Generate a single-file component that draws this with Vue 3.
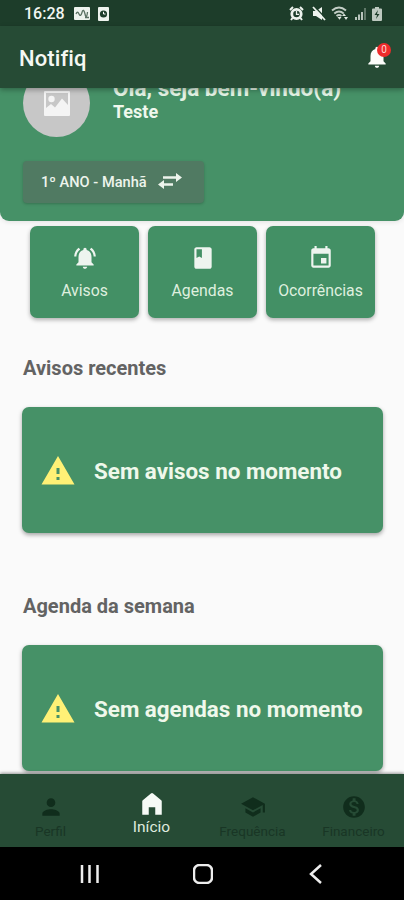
<script setup>
import { ref } from 'vue';

const icons = {
    bell: 'M12 22c1.1 0 2-.9 2-2h-4c0 1.1.89 2 2 2zm6-6v-5c0-3.07-1.64-5.64-4.5-6.32V4c0-.83-.67-1.5-1.5-1.5s-1.5.67-1.5 1.5v.68C7.63 5.36 6 7.92 6 11v5l-2 2v1h16v-1l-2-2z',
    bellActive: 'M7.58 4.08L6.15 2.65C3.75 4.48 2.17 7.3 2.03 10.5h2c.15-2.65 1.51-4.97 3.55-6.42zm12.39 6.42h2c-.15-3.2-1.73-6.02-4.12-7.85l-1.42 1.43c2.02 1.45 3.39 3.77 3.54 6.42zM18 11c0-3.07-1.64-5.64-4.5-6.32V4c0-.83-.67-1.5-1.5-1.5s-1.5.67-1.5 1.5v.68C7.63 5.36 6 7.92 6 11v5l-2 2v1h16v-1l-2-2v-5zm-6 11c.14 0 .27-.01.4-.04.65-.14 1.18-.58 1.44-1.18.1-.24.15-.5.15-.78h-4c.01 1.1.9 2 2.01 2z',
    book: 'M18 2H6c-1.1 0-2 .9-2 2v16c0 1.1.9 2 2 2h12c1.1 0 2-.9 2-2V4c0-1.1-.9-2-2-2zM6 4h5v8l-2.5-1.5L6 12V4z',
    event: 'M17 12h-5v5h5v-5zM16 1v2H8V1H6v2H5c-1.11 0-1.99.9-1.99 2L3 19c0 1.1.89 2 2 2h14c1.1 0 2-.9 2-2V5c0-1.1-.9-2-2-2h-1V1h-2zm3 18H5V8h14v11z',
    warning: 'M1 21h22L12 2 1 21zm12-3h-2v-2h2v2zm0-4h-2v-4h2v4z',
    person: 'M12 12c2.21 0 4-1.79 4-4s-1.79-4-4-4-4 1.79-4 4 1.79 4 4 4zm0 2c-2.67 0-8 1.34-8 4v2h16v-2c0-2.66-5.33-4-8-4z',
    home: 'M3 22V9.5Q3 9 3.5 8.6L11 2.3Q12 1.5 13 2.3L20.5 8.6Q21 9 21 9.5V22h-6v-7H9v7z',
    school: 'M5 13.18v4L12 21l7-3.82v-4L12 17l-7-3.82zM12 3L1 9l11 6 9-4.91V17h2V9L12 3z',
    money: 'M12 2C6.48 2 2 6.48 2 12s4.48 10 10 10 10-4.48 10-10S17.52 2 12 2zm1.41 16.09V20h-2.67v-1.93c-1.71-.36-3.16-1.46-3.27-3.4h1.96c.1 1.05.82 1.87 2.65 1.87 1.96 0 2.4-.98 2.4-1.59 0-.83-.44-1.61-2.67-2.14-2.48-.6-4.18-1.62-4.18-3.67 0-1.72 1.39-2.84 3.11-3.21V4h2.67v1.95c1.86.45 2.79 1.86 2.85 3.39H14.3c-.05-1.11-.64-1.87-2.22-1.87-1.5 0-2.4.68-2.4 1.64 0 .84.65 1.39 2.67 1.91s4.18 1.39 4.18 3.91c-.01 1.83-1.38 2.83-3.12 3.16z',
};

const shortcuts = [
    { name: 'Avisos', icon: icons.bellActive },
    { name: 'Agendas', icon: icons.book },
    { name: 'Ocorrências', icon: icons.event },
];

const sections = [
    { title: 'Avisos recentes', message: 'Sem avisos no momento' },
    { title: 'Agenda da semana', message: 'Sem agendas no momento' },
];

const tabs = [
    { name: 'Perfil', icon: icons.person },
    { name: 'Início', icon: icons.home },
    { name: 'Frequência', icon: icons.school },
    { name: 'Financeiro', icon: icons.money },
];

const activeTab = ref('Início');
const unread = ref(0);
</script>

<template>
  <div class="phone">
    <div class="status-bar">
      <span class="clock">16:28</span>
      <svg class="st-mail" viewBox="0 0 16 13">
        <rect width="16" height="13" rx="1" fill="#eef3ee" />
        <path d="M2 7q1.500-3.500 3 0t3-1.500 3 1.500 2.500-2M11 10.500h4" fill="none" stroke="#5c7264" stroke-width="1.300" />
      </svg>
      <svg class="st-app" viewBox="0 0 11 14">
        <rect width="11" height="14" rx="1" fill="#eef3ee" />
        <circle cx="5.500" cy="7" r="3.600" fill="#1d3d2a" />
        <path d="M5.500 4.800V7h2" fill="none" stroke="#fff" />
      </svg>
      <div class="status-icons">
        <svg width="15" height="15" viewBox="0 0 15 15">
          <path d="M1 4L4 1M14 4L11 1M3.500 12L2 14M11.500 12L13 14" stroke="#eef3ee" stroke-width="2" />
          <circle cx="7.500" cy="8" r="4.700" fill="#1d3d2a" stroke="#eef3ee" stroke-width="2.800" />
          <path d="M7.500 5v3.300h2.500" fill="none" stroke="#eef3ee" stroke-width="1.300" />
        </svg>
        <svg width="14" height="15" viewBox="0 0 14 15">
          <path d="M1 5h3l6-4v13l-6-4H1z" fill="#eef3ee" />
          <path d="M2 0l12 12.500" stroke="#1d3d2a" stroke-width="1.400" />
          <path d="M1 1l12 13" stroke="#eef3ee" stroke-width="1.800" />
        </svg>
        <svg width="18" height="15" viewBox="0 0 18 15">
          <path d="M1 4.500q7-6 14 0M3.300 7.500q4.700-4 9.400 0M5.500 10q2.500-2 5 0" fill="none" stroke="#c3cec6" stroke-width="1.900" />
          <path d="M6.500 11h4L8.500 13.800zM11 10l2-2.500 2 2.500zM13 11h4l-2 3z" fill="#dfe7e1" />
        </svg>
        <svg width="13" height="14" viewBox="0 0 13 14">
          <path d="M1 10h2v3H1zM4 7.500h2V13H4zM7 5h2v8H7z" fill="#b7c4bb" />
          <path d="M10 1h2v12h-2z" fill="#5f7868" />
        </svg>
        <svg class="st-battery" width="10" height="14" viewBox="0 0 10 14">
          <path d="M3 0h4v1.500h2q1 0 1 1V13q0 1-1 1H1q-1 0-1-1V2.500q0-1 1-1h2z" fill="#bdc9c0" />
          <path d="M6 3L2.500 8H5l-1 4 3.500-5H5z" fill="#1d3d2a" />
        </svg>
      </div>
    </div>

    <header class="app-bar">
      <h1>Notifiq</h1>
      <div class="notify">
        <svg viewBox="0 0 24 24"><path :d="icons.bell" /></svg>
        <span class="badge">{{ unread }}</span>
      </div>
    </header>

    <main class="content">
      <section class="profile">
        <div class="profile-row">
          <div class="avatar">
            <svg viewBox="0 0 26 25">
              <path fill-rule="evenodd" d="M1 0h24q1 0 1 1v23q0 1-1 1H1q-1 0-1-1V1q0-1 1-1zM2 2v19h22V2z" />
              <circle cx="7.500" cy="8" r="3.200" />
              <path d="M2 22v-5l5-4 4 3.500 7-9 6 6.500v8z" />
            </svg>
          </div>
          <div class="hello">
            <div class="hello-title">Olá, seja bem-vindo(a)</div>
            <div class="hello-name">Teste</div>
          </div>
        </div>
        <button class="class-switch">
          <span>1º ANO - Manhã</span>
          <svg viewBox="0 0 24 18">
            <path d="M5 5.500h14M5 12.500h10" stroke="currentColor" stroke-width="2.300" />
            <path d="M18 1L24 5.500 18 10zM6 8L0 12.500 6 17z" fill="currentColor" />
          </svg>
        </button>
      </section>

      <div class="shortcuts">
        <div v-for="item in shortcuts" :key="item.name" class="shortcut">
          <svg viewBox="0 0 24 24"><path :d="item.icon" /></svg>
          <span>{{ item.name }}</span>
        </div>
      </div>

      <section v-for="item in sections" :key="item.title" class="block">
        <h2>{{ item.title }}</h2>
        <div class="card">
          <svg viewBox="0 0 24 24"><path :d="icons.warning" /></svg>
          <span>{{ item.message }}</span>
        </div>
      </section>
    </main>

    <nav class="tabs">
      <div
        v-for="tab in tabs"
        :key="tab.name"
        class="tab"
        :class="{ active: tab.name === activeTab }"
        @click="activeTab = tab.name"
      >
        <svg viewBox="0 0 24 24"><path :d="tab.icon" /></svg>
        <span>{{ tab.name }}</span>
      </div>
    </nav>

    <div class="system-nav">
      <svg viewBox="0 0 20 20"><path d="M2 1v18M9.500 1v18M17.500 1v18" /></svg>
      <svg viewBox="0 0 20 20"><rect x="1" y="1" width="18" height="18" rx="5.500" /></svg>
      <svg viewBox="0 0 20 20"><path d="M15 1L5 10l10 9" /></svg>
    </div>
  </div>
</template>

<style>
body {
    margin: 0;
    background: #000;
}
</style>

<style scoped>
.phone {
    width: 404px;
    height: 900px;
    display: flex;
    flex-direction: column;
    overflow: hidden;
    background: #fafafa;
    font-family: Roboto, "Liberation Sans", sans-serif;
}
svg {
    display: block;
    flex: none;
}
.status-bar {
    height: 26px;
    flex: none;
    display: flex;
    align-items: center;
    padding: 1px 22px 0 24px;
    box-sizing: border-box;
    background: #1d3d2a;
}
.clock {
    width: 40px;
    font-size: 16px;
    font-weight: 500;
    color: #f2f6f2;
}
.st-mail {
    width: 16px;
    height: 13px;
    margin-left: 10px;
}
.st-app {
    width: 11px;
    height: 14px;
    margin-left: 8px;
}
.status-icons {
    display: flex;
    align-items: center;
    gap: 5px;
    margin-left: auto;
}
.status-icons svg:first-child {
    margin-right: 3px;
}
.app-bar {
    position: relative;
    z-index: 1;
    height: 62px;
    flex: none;
    display: flex;
    align-items: center;
    justify-content: space-between;
    padding: 0 14px 0 19px;
    box-sizing: border-box;
    background: #264b35;
    box-shadow: 0 2px 5px rgba(0, 0, 0, 0.3);
}
.app-bar h1 {
    margin: 2px 0 0;
    font-size: 22px;
    font-weight: 500;
    letter-spacing: 0.1px;
    color: #f5f8f3;
}
.notify {
    position: relative;
    width: 26px;
    height: 28px;
}
.notify svg {
    width: 26px;
    height: 28px;
    fill: #fcfdfa;
}
.badge {
    position: absolute;
    top: 0;
    right: -1px;
    width: 14px;
    height: 14px;
    border-radius: 50%;
    background: #ee2b2b;
    color: #ffd9d6;
    font-size: 10px;
    line-height: 14px;
    text-align: center;
}
.content {
    flex: 1;
    min-height: 0;
    overflow: hidden;
}
.profile {
    height: 152px;
    margin-top: -19px;
    padding: 0 22px 0 23px;
    border-radius: 0 0 9px 9px;
    background: #469167;
    box-shadow: 0 1px 5px rgba(0, 0, 0, 0.1);
}
.profile-row {
    display: flex;
    gap: 23px;
}
.avatar {
    width: 67px;
    height: 68px;
    display: flex;
    align-items: center;
    justify-content: center;
    border-radius: 50%;
    background: #c7c7c7;
}
.avatar svg {
    width: 26px;
    height: 25px;
    fill: #f4f4f4;
}
.hello {
    padding-top: 7px;
    color: #e3f2e4;
    font-weight: 700;
}
.hello-title {
    font-size: 22.5px;
    line-height: 25px;
    white-space: nowrap;
}
.hello-name {
    font-size: 18px;
    line-height: 21px;
    color: #eff8ed;
}
.class-switch {
    display: flex;
    align-items: center;
    gap: 11px;
    width: 181px;
    height: 42px;
    margin-top: 24px;
    padding: 0 18px;
    border: none;
    border-radius: 4px;
    background: #507a62;
    box-shadow: 0 1px 3px rgba(0, 0, 0, 0.22);
    color: #edf4ec;
    font: 500 14.6px Roboto, sans-serif;
    white-space: nowrap;
}
.class-switch svg {
    width: 24px;
    height: 18px;
    margin-top: -2px;
}
.shortcuts {
    display: flex;
    gap: 9px;
    padding: 5px 29px 0 30px;
}
.shortcut {
    flex: 1;
    height: 92px;
    display: flex;
    flex-direction: column;
    align-items: center;
    padding-top: 19px;
    box-sizing: border-box;
    border-radius: 7px;
    background: #439065;
    box-shadow: 0 2px 4px rgba(0, 0, 0, 0.3);
    color: #dfefdf;
    font-size: 15.8px;
    line-height: 20px;
}
.shortcut svg {
    width: 26px;
    height: 26px;
    margin-bottom: 10px;
    fill: #eef4ef;
}
.block {
    padding: 38px 21px 0 22px;
}
.block + .block {
    padding-top: 61px;
}
.block h2 {
    margin: 0 0 26px 1px;
    font-size: 20px;
    line-height: 25px;
    font-weight: 700;
    color: #636363;
}
.card {
    height: 126px;
    display: flex;
    align-items: center;
    gap: 18px;
    padding: 1px 0 0 18px;
    box-sizing: border-box;
    border-radius: 7px;
    background: #469167;
    box-shadow: 0 2px 4px rgba(0, 0, 0, 0.35);
    color: #eff8eb;
    font-size: 22.4px;
    font-weight: 700;
    white-space: nowrap;
}
.card svg {
    width: 36px;
    height: 36px;
    fill: #fff176;
}
.tabs {
    position: relative;
    height: 73px;
    flex: none;
    display: flex;
    box-sizing: border-box;
    background: #264b35;
    box-shadow: 0 -1px 3px rgba(0, 0, 0, 0.4);
}
.tab {
    flex: 1;
    display: flex;
    flex-direction: column;
    align-items: center;
    padding-top: 20px;
    color: #193625;
    font-size: 13.5px;
    line-height: 16px;
}
.tab svg {
    width: 26px;
    height: 26px;
    margin-bottom: 3px;
    fill: #102d1c;
}
.tab.active {
    padding-top: 17px;
    color: #dfeadf;
    font-size: 15.5px;
}
.tab.active svg {
    margin-bottom: 2px;
    fill: #f6faf6;
}
.system-nav {
    height: 53px;
    flex: none;
    display: flex;
    align-items: center;
    justify-content: space-between;
    padding: 0 78px 0 80px;
    box-sizing: border-box;
    background: #000;
}
.system-nav svg {
    width: 20px;
    height: 20px;
    fill: none;
    stroke: #ededed;
    stroke-width: 2.5;
}
</style>
